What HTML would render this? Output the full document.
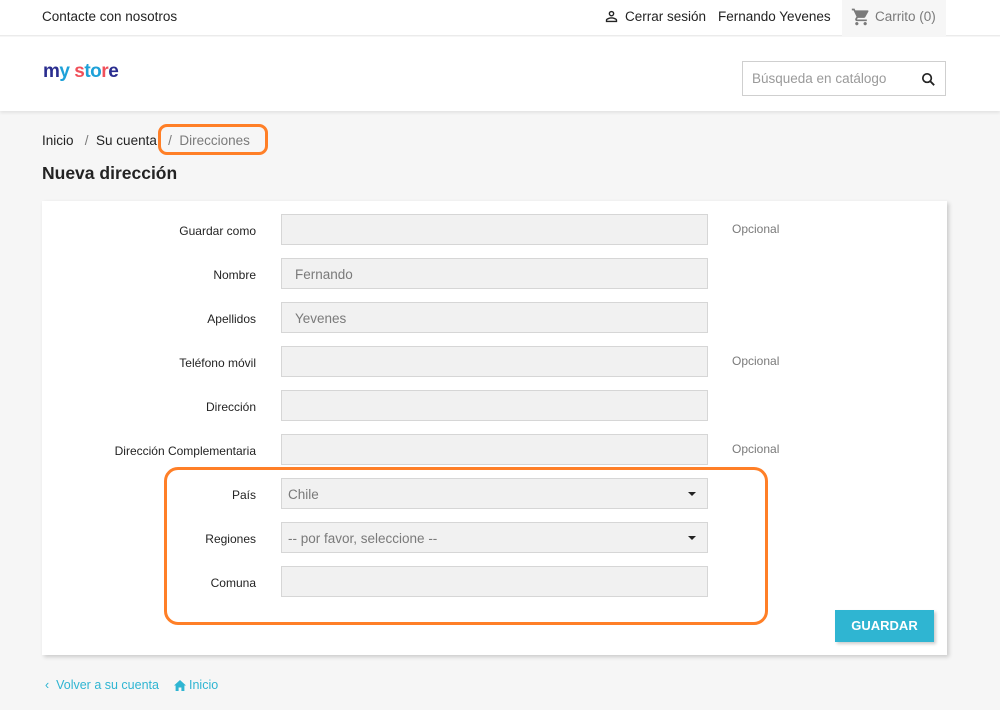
<!DOCTYPE html>
<html><head><meta charset="utf-8"><style>
*{box-sizing:border-box;margin:0;padding:0}
body{width:1000px;height:710px;background:#f6f6f6;font-family:"Liberation Sans",sans-serif;color:#232323;position:relative;overflow:hidden}
.abs{position:absolute;white-space:nowrap}
.top{position:absolute;left:0;top:0;width:1000px;height:36px;background:#fff;border-bottom:1px solid #ebebeb}
.hdr{position:absolute;left:0;top:37px;width:1000px;height:74px;background:#fff;box-shadow:0 2px 3px rgba(0,0,0,.08)}
.card{position:absolute;left:42px;top:201px;width:905px;height:454px;background:#fff;box-shadow:2px 2px 4px rgba(0,0,0,.18)}
.lbl{position:absolute;right:744px;font-size:12px;color:#232323;text-align:right;white-space:nowrap}
.inp{position:absolute;left:281px;width:427px;height:31px;background:#f1f1f1;border:1px solid #d6d6d6;font-size:13.5px;color:#7a7a7a;padding:8px 13px 6px}
.opt{position:absolute;left:732px;font-size:12px;color:#7a7a7a}
.arr{position:absolute;right:11px;top:13px;width:0;height:0;border-left:4px solid transparent;border-right:4px solid transparent;border-top:4px solid #232323}
</style></head><body>
<div class="top"></div>
<div class="abs" style="left:42px;top:9px;font-size:13.5px;color:#232323">Contacte con nosotros</div>
<svg class="abs" style="left:603px;top:8px" width="17" height="17" viewBox="0 0 24 24"><path fill="#232323" d="M12 4a4 4 0 1 1 0 8 4 4 0 0 1 0-8zm0 2a2 2 0 1 0 0 4 2 2 0 0 0 0-4zm0 7c2.700 0 8 1.300 8 4v3H4v-3c0-2.700 5.300-4 8-4zm0 2c-3 0-6 1.500-6 2v1h12v-1c0-.5-3-2-6-2z"/></svg>
<div class="abs" style="left:625px;top:9px;font-size:13.5px">Cerrar sesión</div>
<div class="abs" style="left:718px;top:9px;font-size:13.5px">Fernando Yevenes</div>
<div class="abs" style="left:842px;top:0;width:104px;height:36px;background:#f6f6f6"></div>
<svg class="abs" style="left:851px;top:7px" width="20" height="20" viewBox="0 0 24 24"><path fill="#7a7a7a" d="M7 18c-1.100 0-2 .9-2 2s.9 2 2 2 2-.9 2-2-.9-2-2-2zM1 2v2h2l3.600 7.600-1.400 2.400c-.1.300-.2.600-.2 1 0 1.100.9 2 2 2h12v-2H7.400c-.1 0-.2-.1-.2-.2v-.1l.9-1.700h7.400c.8 0 1.400-.4 1.700-1l3.600-6.500c.1-.2.2-.3.2-.5 0-.6-.4-1-1-1H5.200l-.9-2H1zm16 16c-1.100 0-2 .9-2 2s.9 2 2 2 2-.9 2-2-.9-2-2-2z"/></svg>
<div class="abs" style="left:875px;top:9px;font-size:13.5px;color:#7a7a7a">Carrito (0)</div>
<div class="hdr"></div>
<div class="abs" style="left:43px;top:61px;font-size:19px;font-weight:bold;letter-spacing:-.5px"><span style="color:#2a2d8f">m</span><span style="color:#1ea1d8">y</span> <span style="color:#f0505a">s</span><span style="color:#1ea1d8">to</span><span style="color:#f0505a">r</span><span style="color:#2a2d8f">e</span></div>
<div class="abs" style="left:742px;top:61px;width:204px;height:35px;background:#fff;border:1px solid #cfcfcf"></div>
<div class="abs" style="left:752px;top:71px;font-size:13.5px;color:#9a9a9a">Búsqueda en catálogo</div>
<svg class="abs" style="left:920px;top:71px" width="17" height="17" viewBox="0 0 24 24"><circle cx="10" cy="10" r="6" fill="none" stroke="#232323" stroke-width="2.400"/><path d="M14.500 14.500 20 20" stroke="#232323" stroke-width="2.600"/></svg>
<div class="abs" style="left:42px;top:133px;font-size:13.5px;color:#232323">Inicio &nbsp;&nbsp;<span style="color:#7a7a7a">/</span>&nbsp;&nbsp;Su cuenta &nbsp;&nbsp;<span style="color:#7a7a7a">/</span>&nbsp;&nbsp;<span style="color:#7a7a7a">Direcciones</span></div>
<div class="abs" style="left:158px;top:124px;width:110px;height:31px;border:3px solid #ff7f27;border-radius:9px"></div>
<div class="abs" style="left:42px;top:163px;font-size:17.5px;font-weight:bold">Nueva dirección</div>
<div class="card"></div>
<div class="lbl" style="top:224px">Guardar como</div><div class="inp" style="top:214px"></div><div class="opt" style="top:222px">Opcional</div>
<div class="lbl" style="top:268px">Nombre</div><div class="inp" style="top:258px">Fernando</div>
<div class="lbl" style="top:312px">Apellidos</div><div class="inp" style="top:302px">Yevenes</div>
<div class="lbl" style="top:356px">Teléfono móvil</div><div class="inp" style="top:346px"></div><div class="opt" style="top:354px">Opcional</div>
<div class="lbl" style="top:400px">Dirección</div><div class="inp" style="top:390px"></div>
<div class="lbl" style="top:444px">Dirección Complementaria</div><div class="inp" style="top:434px"></div><div class="opt" style="top:442px">Opcional</div>
<div class="lbl" style="top:488px">País</div><div class="inp" style="top:478px;padding-left:6px">Chile<div class="arr"></div></div>
<div class="lbl" style="top:532px">Regiones</div><div class="inp" style="top:522px;padding-left:6px">-- por favor, seleccione --<div class="arr"></div></div>
<div class="lbl" style="top:576px">Comuna</div><div class="inp" style="top:566px"></div>
<div class="abs" style="left:164px;top:467px;width:604px;height:158px;border:3px solid #ff7f27;border-radius:14px"></div>
<div class="abs" style="left:835px;top:610px;width:99px;height:32px;background:#2fb5d2;color:#fff;font-weight:bold;font-size:13px;text-align:center;line-height:32px;box-shadow:2px 2px 3px rgba(0,0,0,.2)">GUARDAR</div>
<div class="abs" style="left:45px;top:678px;font-size:12.5px;color:#2fb5d2">‹&nbsp; Volver a su cuenta</div>
<svg class="abs" style="left:174px;top:680px" width="12" height="11" viewBox="0 0 12 11"><path fill="#2fb5d2" d="M6 0 0 5.500h1.600V11h3V7.500h2.800V11h3V5.500H12z"/></svg>
<div class="abs" style="left:189px;top:678px;font-size:12.5px;color:#2fb5d2">Inicio</div>
</body></html>
